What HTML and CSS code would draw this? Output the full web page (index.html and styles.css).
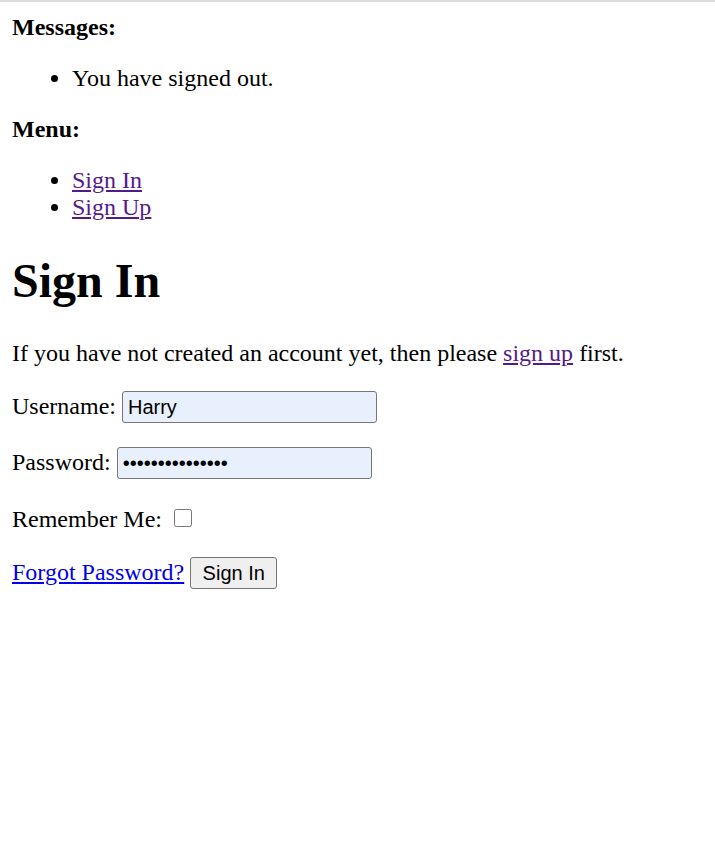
FILE: index.html
```html
<!DOCTYPE html>
<html>
<head>
<meta charset="utf-8">
<title>Sign In</title>
<link rel="stylesheet" href="styles.css">
</head>
<body>
<div class="section-title">Messages:</div>
<ul class="list">
  <li>You have signed out.</li>
</ul>
<div class="section-title">Menu:</div>
<ul class="list">
  <li><a class="visited" href="#">Sign In</a></li>
  <li><a class="visited" href="#">Sign Up</a></li>
</ul>
<h1 class="heading">Sign In</h1>
<p class="para">If you have not created an account yet, then please <a class="visited" href="#">sign up</a> first.</p>
<form class="form">
  <p class="para">Username: <input class="field" type="text" value="Harry"></p>
  <p class="para">Password: <input class="field" type="password" value="harrypassword12"></p>
  <p class="para">Remember Me: <input class="check" type="checkbox"></p>
  <p class="para"><a class="link" href="#">Forgot Password?</a> <button class="btn" type="button">Sign In</button></p>
</form>
</body>
</html>
```
FILE: styles.css
```css
html {
  border-top: 2px solid #dddddd;
  background: #ffffff;
}
body {
  margin: 12px;
  font-family: "Liberation Serif", "Times New Roman", serif;
  font-size: 24px;
  color: #000000;
}
.section-title {
  font-weight: bold;
}
.list {
  margin: 24px 0;
  padding-left: 60px;
}
.heading {
  font-size: 48px;
  font-weight: bold;
  margin: 32px 0;
}
.para {
  margin: 24px 0;
}
.form {
  margin: 0;
}
.visited {
  color: #551a8b;
}
.link {
  color: #0000ee;
}
.field {
  box-sizing: border-box;
  width: 255px;
  height: 32px;
  padding: 1px 5px;
  font-family: "Liberation Sans", Arial, sans-serif;
  font-size: 20px;
  color: #000000;
  background: #e8f0fe;
  border: 1px solid #767676;
  border-radius: 3px;
  vertical-align: baseline;
}
.check {
  width: 18px;
  height: 18px;
  margin: 6px 4px 5px 6px;
  vertical-align: baseline;
}
.btn {
  box-sizing: border-box;
  height: 32px;
  width: 87px;
  padding: 1px 9px;
  font-family: "Liberation Sans", Arial, sans-serif;
  font-size: 20px;
  color: #000000;
  background: #efefef;
  border: 1px solid #767676;
  border-radius: 3px;
}
```
